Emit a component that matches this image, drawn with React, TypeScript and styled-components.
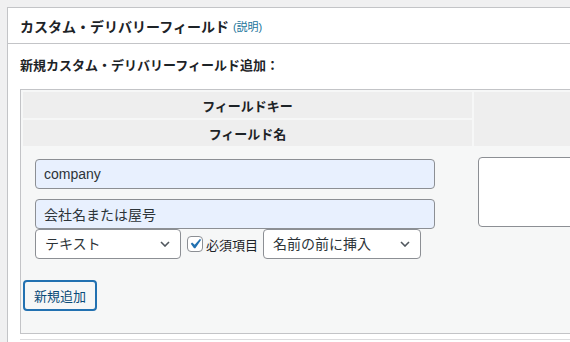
import styled, { createGlobalStyle } from 'styled-components';

const GlobalStyle = createGlobalStyle`
  html, body {
    margin: 0;
    padding: 0;
    background: #f0f0f1;
    overflow: hidden;
  }
  body {
    font-family: "Liberation Sans", "Noto Sans CJK JP", sans-serif;
    font-size: 13px;
    color: #3c434a;
  }
`;

const chevron = `url("data:image/svg+xml,%3Csvg xmlns='http://www.w3.org/2000/svg' width='10' height='6' viewBox='0 0 10 6'%3E%3Cpath d='M1 1l4 4 4-4' fill='none' stroke='%2350575e' stroke-width='1.6'/%3E%3C/svg%3E")`;
const tick = `url("data:image/svg+xml,%3Csvg xmlns='http://www.w3.org/2000/svg' viewBox='0 0 20 20'%3E%3Cpath d='M14.83 4.89l1.34.94-5.81 8.38H9.02L5.78 9.67l1.34-1.25 2.57 2.4z' fill='%232271b1'/%3E%3C/svg%3E")`;

// the screen only shows the top-left part of a wider admin page
const Viewport = styled.div`
  width: 570px;
  height: 342px;
  overflow: hidden;
`;

const Page = styled.div`
  padding: 7px 0 0 7px;
  width: 900px;
`;

const Postbox = styled.div`
  background: #fff;
  border: 1px solid #c3c4c7;
  min-height: 420px;
`;

const PostboxHeader = styled.h2`
  margin: 0;
  height: 35px;
  display: flex;
  align-items: center;
  padding: 0 12px;
  border-bottom: 1px solid #c3c4c7;
  font-size: 14px;
  font-weight: 700;
  color: #1d2327;
`;

const HelpLink = styled.a`
  margin-left: 4px;
  font-size: 11px;
  font-weight: 400;
  color: #21759b;
  text-decoration: none;
`;

const Inside = styled.div`
  padding: 12px 12px 0;
`;

const SubTitle = styled.h4`
  margin: 0 0 13px;
  line-height: 20px;
  font-size: 13px;
  font-weight: 700;
  color: #1d2327;
`;

const FieldTable = styled.table`
  border: 1px solid #c3c4c7;
  border-spacing: 2px;
  background: #f6f7f7;
  width: 720px;
`;

const HeadCell = styled.th`
  height: 26px;
  padding: 0;
  background: #eeeeee;
  font-size: 13px;
  font-weight: 700;
  color: #1d2327;
  text-align: center;
`;

const KeyCell = styled.td`
  width: 425px;
  padding: 11px 12px 12px;
  vertical-align: top;
`;

const ValueCell = styled.td`
  padding: 9px 4px 0;
  vertical-align: top;
`;

const FootCell = styled.td`
  padding: 7px 0 20px;
`;

const TextInput = styled.input<{ $gap?: number }>`
  display: block;
  box-sizing: border-box;
  width: 400px;
  height: 30px;
  margin: 0 0 ${({ $gap }) => $gap ?? 0}px;
  padding: 0 8px;
  border: 1px solid #8c8f94;
  border-radius: 4px;
  background: #e8f0fe;
  font-family: inherit;
  font-size: 14px;
  color: #2c3338;
  outline: none;
`;

const OptionRow = styled.div`
  display: flex;
  align-items: center;
`;

const Select = styled.select<{ $width: number }>`
  appearance: none;
  box-sizing: border-box;
  width: ${({ $width }) => $width}px;
  height: 30px;
  padding: 0 24px 0 9px;
  border: 1px solid #8c8f94;
  border-radius: 4px;
  background: #fff ${chevron} no-repeat right 10px center;
  font-family: inherit;
  font-size: 14px;
  color: #2c3338;
  outline: none;
`;

const Check = styled.input`
  appearance: none;
  box-sizing: border-box;
  width: 16px;
  height: 16px;
  margin: 0 3px 0 6px;
  border: 1px solid #8c8f94;
  border-radius: 4px;
  background: #fff;
  &:checked {
    background: #fff ${tick} no-repeat center / 20px 20px;
  }
`;

const CheckLabel = styled.label`
  display: flex;
  align-items: center;
  margin-right: 5px;
  font-size: 13px;
  color: #1d2327;
`;

const ValueArea = styled.textarea`
  display: block;
  box-sizing: border-box;
  width: 220px;
  height: 70px;
  border: 1px solid #8c8f94;
  border-radius: 4px;
  background: #fff;
  resize: none;
`;

const AddButton = styled.button`
  box-sizing: border-box;
  height: 31px;
  padding: 0 9px;
  border: 2px solid #2271b1;
  border-radius: 4px;
  background: #f6f7f7;
  font-family: inherit;
  font-size: 13px;
  color: #0a4b78;
`;

const NextSection = styled.div`
  margin-top: 5px;
  border-top: 1px solid #dcdcde;
`;

export default function App() {
  return (
    <>
      <GlobalStyle />
      <Viewport>
        <Page>
          <Postbox>
            <PostboxHeader>
              カスタム・デリバリーフィールド
              <HelpLink href="#">(説明)</HelpLink>
            </PostboxHeader>
            <Inside>
              <SubTitle>新規カスタム・デリバリーフィールド追加：</SubTitle>
              <FieldTable>
                <thead>
                  <tr>
                    <HeadCell>フィールドキー</HeadCell>
                    <HeadCell rowSpan={2}></HeadCell>
                  </tr>
                  <tr>
                    <HeadCell>フィールド名</HeadCell>
                  </tr>
                </thead>
                <tbody>
                  <tr>
                    <KeyCell>
                      <TextInput defaultValue="company" $gap={10} />
                      <TextInput defaultValue="会社名または屋号" />
                      <OptionRow>
                        <Select $width={146} defaultValue="text">
                          <option value="text">テキスト</option>
                        </Select>
                        <CheckLabel>
                          <Check type="checkbox" defaultChecked />
                          必須項目
                        </CheckLabel>
                        <Select $width={158} defaultValue="before">
                          <option value="before">名前の前に挿入</option>
                        </Select>
                      </OptionRow>
                    </KeyCell>
                    <ValueCell>
                      <ValueArea />
                    </ValueCell>
                  </tr>
                </tbody>
                <tfoot>
                  <tr>
                    <FootCell colSpan={2}>
                      <AddButton type="button">新規追加</AddButton>
                    </FootCell>
                  </tr>
                </tfoot>
              </FieldTable>
              <NextSection />
            </Inside>
          </Postbox>
        </Page>
      </Viewport>
    </>
  );
}
